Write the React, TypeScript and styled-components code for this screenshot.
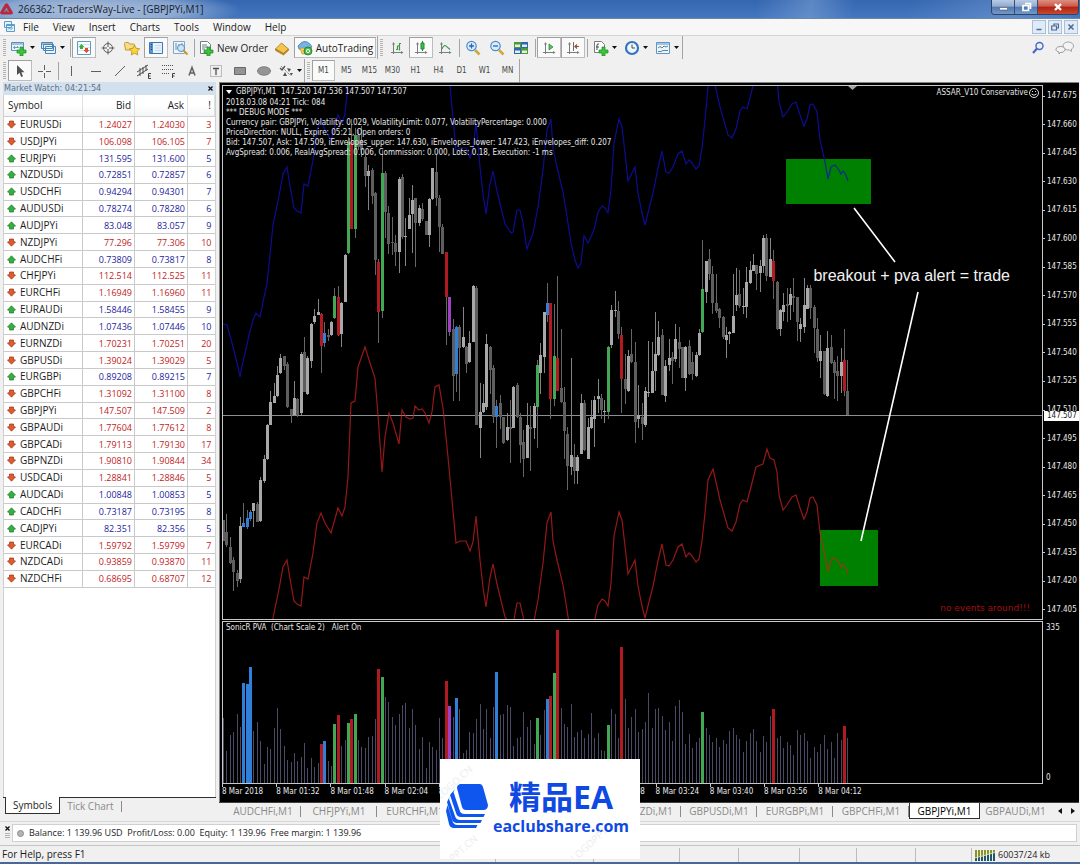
import React from 'react';
import styled, { createGlobalStyle, css } from 'styled-components';

/* ---------- data ---------- */

type Quote = [symbol: string, bid: string, ask: string, spread: number, up: 0 | 1];

const QUOTES: Quote[] = [
  ['EURUSDi', '1.24027', '1.24030', 3, 0],
  ['USDJPYi', '106.098', '106.105', 7, 0],
  ['EURJPYi', '131.595', '131.600', 5, 1],
  ['NZDUSDi', '0.72851', '0.72857', 6, 1],
  ['USDCHFi', '0.94294', '0.94301', 7, 1],
  ['AUDUSDi', '0.78274', '0.78280', 6, 1],
  ['AUDJPYi', '83.048', '83.057', 9, 1],
  ['NZDJPYi', '77.296', '77.306', 10, 0],
  ['AUDCHFi', '0.73809', '0.73817', 8, 1],
  ['CHFJPYi', '112.514', '112.525', 11, 0],
  ['EURCHFi', '1.16949', '1.16960', 11, 0],
  ['EURAUDi', '1.58446', '1.58455', 9, 1],
  ['AUDNZDi', '1.07436', '1.07446', 10, 1],
  ['EURNZDi', '1.70231', '1.70251', 20, 0],
  ['GBPUSDi', '1.39024', '1.39029', 5, 0],
  ['EURGBPi', '0.89208', '0.89215', 7, 1],
  ['GBPCHFi', '1.31092', '1.31100', 8, 0],
  ['GBPJPYi', '147.507', '147.509', 2, 0],
  ['GBPAUDi', '1.77604', '1.77612', 8, 0],
  ['GBPCADi', '1.79113', '1.79130', 17, 0],
  ['GBPNZDi', '1.90810', '1.90844', 34, 0],
  ['USDCADi', '1.28841', '1.28846', 5, 0],
  ['AUDCADi', '1.00848', '1.00853', 5, 1],
  ['CADCHFi', '0.73187', '0.73195', 8, 1],
  ['CADJPYi', '82.351', '82.356', 5, 1],
  ['EURCADi', '1.59792', '1.59799', 7, 0],
  ['NZDCADi', '0.93859', '0.93870', 11, 0],
  ['NZDCHFi', '0.68695', '0.68707', 12, 0],
];

const COLORS: Record<string, string> = {
  l: '#a8a8a8',
  d: '#5e5e5e',
  g: '#43a854',
  r: '#b01a20',
  b: '#2f80d8',
  p: '#a040c4',
};

/* high, body top, body bottom, low, colour */
const CANDLES = `520 520 541 541 d;514 532 545 547 d;537 547 563 564 d;557 560 572 591 d;570 573 581 587 d;517 526 579 583 l;503 523 527 527 b;510 518 527 529 b;510 512 519 521 b;503 503 511 527 l;502 504 522 522 d;477 480 521 522 l;455 459 481 483 l;424 425 459 460 l;391 402 425 425 l;383 396 403 403 l;366 375 396 397 l;354 358 373 374 l;356 356 366 370 d;362 364 407 408 d;409 409 415 423 d;381 398 415 416 l;398 399 415 417 d;352 354 413 415 l;337 352 392 392 d;356 358 394 395 l;323 324 361 368 l;309 316 322 324 l;299 312 315 315 l;313 314 346 373 r;322 333 343 347 b;329 335 337 341 d;321 322 335 336 l;288 296 318 319 g;286 297 335 336 r;302 303 334 347 l;254 255 302 302 l;137 142 253 254 g;119 142 229 229 r;128 135 229 238 g;130 135 147 150 d;126 140 150 157 d;152 157 176 187 d;165 171 176 210 l;168 170 196 204 d;192 193 260 275 d;259 262 312 343 r;150 173 311 318 g;171 173 212 238 d;206 213 244 254 d;217 242 243 255 d;235 243 252 266 d;177 179 252 273 l;174 177 237 239 d;218 236 237 266 l;198 215 229 229 l;185 200 214 253 l;198 198 223 267 d;205 208 223 226 l;203 209 219 221 d;221 221 235 235 d;198 199 235 247 l;168 168 199 200 l;155 172 198 206 d;195 198 227 252 d;224 227 254 254 d;252 252 297 345 r;297 297 332 336 p;319 329 376 401 d;326 327 374 392 b;325 327 348 401 d;307 337 347 348 l;346 347 364 373 d;331 343 362 363 l;285 286 342 342 l;286 288 425 425 d;383 412 428 458 l;384 403 412 413 l;334 344 407 410 l;346 347 370 394 d;365 368 417 423 d;400 406 417 448 b;395 403 417 429 d;417 417 443 444 d;413 427 440 441 l;400 427 429 463 d;386 387 428 428 l;383 385 417 418 d;413 417 445 463 d;430 442 459 477 d;403 425 458 458 l;406 427 429 471 d;403 406 428 439 l;360 365 407 448 g;343 355 373 394 l;312 312 357 373 l;283 303 315 322 b;303 303 399 419 r;304 356 399 406 g;276 358 391 391 r;329 388 402 403 d;387 402 431 459 d;427 434 466 490 d;358 455 467 475 l;444 457 471 484 d;455 457 471 484 l;394 403 454 454 l;400 403 450 451 d;418 427 459 459 l;400 417 428 429 l;396 400 419 447 l;379 396 399 413 l;394 398 410 419 d;400 411 412 423 l;346 347 412 419 g;305 310 345 348 l;291 310 311 317 l;301 311 334 339 d;327 335 379 413 r;354 379 389 404 d;350 356 391 392 l;329 354 362 363 d;342 362 422 443 d;385 415 419 428 l;403 417 424 440 d;387 391 425 427 l;341 392 393 397 l;342 371 393 393 l;312 354 371 391 l;321 337 355 356 l;329 335 395 395 d;360 366 396 402 l;339 358 365 371 l;352 357 361 384 d;324 339 359 362 l;327 342 349 368 d;347 347 378 378 d;346 347 378 391 l;340 346 374 375 d;352 362 374 380 d;352 355 376 377 l;329 333 355 356 l;240 289 332 333 g;261 261 292 303 l;249 259 274 280 d;266 274 303 314 d;274 303 311 313 d;308 309 318 328 d;316 317 337 339 d;327 335 340 358 l;331 332 334 344 l;274 316 333 333 l;268 295 305 311 l;270 294 306 308 d;288 306 307 314 l;267 282 307 318 l;261 270 283 284 l;254 265 271 271 l;265 265 274 290 d;260 266 273 292 l;235 238 266 273 l;234 238 276 281 d;238 259 277 277 l;250 261 281 299 r;281 282 329 330 d;309 310 329 336 l;293 305 312 321 l;288 304 306 322 d;288 294 305 320 l;278 296 298 312 d;297 297 322 341 d;318 324 329 342 l;278 305 327 333 l;285 288 309 309 l;285 288 308 319 d;305 307 328 353 d;318 329 358 362 d;335 351 361 378 l;351 351 394 395 d;331 348 396 397 l;335 347 363 364 d;360 362 373 399 d;356 371 376 401 d;348 362 376 393 l;329 360 391 396 r;360 391 415 415 d`
  .split(';')
  .map((row) => {
    const [high, top, bottom, low, color] = row.split(' ');
    return { high: +high, top: +top, bottom: +bottom, low: +low, color };
  });

/* upper envelope; the lower one runs ENVELOPE_GAP below it */
const ENVELOPE =
  '223,324 227,325 232,343 238,367 240,377 242,366 246,349 249,335 253,320 256,313 260,317 263,302 267,284 270,255 273,225 279,196 283,174 287,167 290,186 294,208 297,211 301,213 304,184 308,186 313,160 317,130 321,120 325,130 331,140 338,115 342,123 345,114 348,84 351,10 355,8 358,-26 365,-46 370,-30 375,-15 378,22 382,79 385,44 389,20 393,30 399,51 402,17 406,24 410,26 413,25 415,13 419,17 422,16 425,20 429,30 432,19 435,-6 439,-8 443,15 448,64 452,107 456,150 460,148 466,148 470,158 473,149 476,123 480,167 483,194 486,214 490,184 493,171 497,191 505,224 511,233 513,232 517,210 520,210 523,223 527,249 533,233 538,207 543,170 547,130 551,119 553,148 557,167 563,192 567,217 571,243 575,260 578,268 581,263 584,236 588,243 594,230 598,212 602,206 605,208 608,213 611,190 614,143 619,119 622,127 625,153 628,181 632,173 635,167 638,193 642,213 645,225 648,213 653,193 658,168 662,151 666,172 669,173 673,167 678,154 682,151 686,164 689,160 692,163 696,169 699,166 702,148 705,120 708,87 713,76 716,89 720,107 728,135 732,138 736,129 740,111 743,107 747,109 752,90 756,74 763,71 767,56 770,65 774,67 777,79 779,102 783,117 787,112 792,104 796,102 800,115 804,126 807,119 810,105 813,104 817,112 820,140 825,162 828,179 831,167 835,165 839,170 841,174 843,171 846,175 848,181';
const ENVELOPE_GAP = 393;

/* bar tops, with a leading letter for highlighted bars */
const VOLUMES =
  '718 751 735 732 714 727 b683 b684 b667 731 722 741 764 747 749 728 708 729 746 760 762 753 761 757 743 768 758 767 763 r744 b741 761 766 g724 r715 746 740 g723 r719 g714 740 747 748 737 736 719 r669 g677 697 702 717 725 714 705 703 728 709 725 749 737 768 742 747 750 718 738 r681 p706 717 b698 709 753 750 732 733 719 704 729 709 738 707 b672 715 714 705 707 746 738 737 712 727 720 744 g718 735 710 b699 r696 g673 r630 708 724 727 704 737 732 730 738 734 713 738 733 750 751 g725 709 714 738 r647 699 728 717 709 732 729 722 693 728 709 708 716 730 722 741 706 700 712 744 734 748 742 738 g712 728 735 742 738 747 740 744 731 728 735 739 752 741 733 729 741 752 736 742 716 r709 738 736 748 742 745 755 730 735 733 741 758 747 752 744 735 749 742 758 733 740 r726 738'.split(
    ' ',
  );

const BAR_STEP = 54 / 16;
const barX = (i: number) => Math.round(223 + i * BAR_STEP);

const PRICES = Array.from({ length: 19 }, (_, i) => (147.675 - i * 0.015).toFixed(3));
const TIMES = ['2018', '01:32', '01:48', '02:04', '02:20', '02:36', '02:52', '03:08', '03:24', '03:40', '03:56', '04:12'];
const TABS = ['AUDCHFi', 'CHFJPYi', 'EURCHFi', 'EURAUDi', 'AUDNZDi', 'EURNZDi', 'GBPUSDi', 'EURGBPi', 'GBPCHFi', 'GBPJPYi', 'GBPAUDi'];
const COMMENT = [
  '2018.03.08 04:21 Tick: 084',
  '*** DEBUG MODE ***',
  'Currency pair: GBPJPYi, Volatility: 0.029, VolatilityLimit: 0.077, VolatilityPercentage: 0.000',
  'PriceDirection: NULL, Expire: 05:21, Open orders: 0',
  'Bid: 147.507, Ask: 147.509, iEnvelopes_upper: 147.630, iEnvelopes_lower: 147.423, iEnvelopes_diff: 0.207',
  'AvgSpread: 0.006, RealAvgSpread: 0.006, Commission: 0.000, Lots: 0.18, Execution: -1 ms',
];

/* ---------- styles ---------- */

const UI = '"Open Sans", "Noto Sans", sans-serif';
const SMALL = '"DejaVu Sans Condensed", "DejaVu Sans", sans-serif';

const GlobalStyle = createGlobalStyle`
  * { box-sizing: border-box; }
  body { margin: 0; background: #f0f0f0; color: #1c1c1c; font: 10px/14px ${UI}; }
  button { margin: 0; padding: 0; border: 0; background: none; color: inherit; font: inherit; }
  svg { display: block; flex: none; }
  p, h1, h2, ul { margin: 0; padding: 0; font: inherit; list-style: none; }
`;

const Window = styled.div`
  position: relative;
  display: flex;
  flex-direction: column;
  min-height: 100vh;
  overflow: hidden;
`;

const TitleBar = styled.header`
  display: flex;
  align-items: center;
  height: 19px;
  padding-right: 1px;
  border-bottom: 1px solid #6f87a6;
  background:
    radial-gradient(ellipse 150px 22px at 90px 10px, rgba(190, 205, 225, 0.85), rgba(190, 205, 225, 0.6) 60%, transparent),
    linear-gradient(100deg, transparent 70%, rgba(130, 165, 215, 0.5) 75%, transparent 79%, transparent 84%, rgba(130, 165, 215, 0.45) 94%, transparent),
    linear-gradient(#3566b0, #4477bf);
`;

const Title = styled.h1`
  flex: 1;
  padding-left: 5px;
  color: #16202e;
`;

const WindowButtons = styled.div`
  display: flex;
  align-self: flex-start;
  height: 15px;
  border: 1px solid #2c4468;
  border-top: 0;
  border-radius: 0 0 4px 4px;
  overflow: hidden;
`;

const WindowButton = styled.button<{ $close?: boolean }>`
  display: grid;
  place-items: center;
  width: ${(p) => (p.$close ? 40 : 23)}px;
  border-right: ${(p) => (p.$close ? '0' : '1px solid #34507a')};
  background: ${(p) =>
    p.$close
      ? 'linear-gradient(#dd9080, #c9584a 45%, #b02010 50%, #c84a30)'
      : 'linear-gradient(#b9cbe4, #91abd0 45%, #5378ad 50%, #7398c8)'};
`;

const MenuBar = styled.nav`
  display: flex;
  align-items: center;
  height: 17px;
  padding: 0 2px 0 4px;
  border-bottom: 1px solid #d4d4d4;
  background: #f7f7f7;
`;

const MenuItem = styled.button`
  margin-left: 14px;
  &:first-of-type {
    margin-left: 7px;
  }
`;

const Spacer = styled.div`
  flex: 1;
`;

const ChildButton = styled.button`
  display: grid;
  place-items: center;
  width: 14px;
  height: 14px;
  margin-left: 2px;
  border: 1px solid #a8c0d8;
  background: #dfebf8;
`;

const ToolBar = styled.div`
  display: flex;
  align-items: center;
  height: 23px;
  padding-left: 1px;
`;

const Group = styled.div<{ $pad?: number }>`
  display: flex;
  align-items: center;
  align-self: stretch;
  padding-right: ${(p) => p.$pad ?? 0}px;
  border-right: 1px solid #a4a4a4;
`;

const Grip = styled.span`
  width: 3px;
  height: 17px;
  margin: 0 2px;
  background: repeating-linear-gradient(#b4b4b4 0 1px, #f0f0f0 1px 2px);
`;

const Divider = styled.span`
  width: 1px;
  height: 18px;
  margin: 0 1px 0 2px;
  background: #a4a4a4;
`;

const Tool = styled.button<{ $on?: boolean; $w?: number }>`
  display: flex;
  align-items: center;
  justify-content: center;
  gap: 3px;
  width: ${(p) => p.$w ?? 24}px;
  height: 21px;
  white-space: nowrap;
  ${(p) =>
    p.$on &&
    css`
      border: 1px solid #bcbcbc;
      border-top-color: #a0a0a0;
      border-left-color: #a0a0a0;
      background: #fafafa;
    `}
`;

const Period = styled(Tool)`
  font: 8px/12px ${SMALL};
  color: #484848;
`;

const Main = styled.main`
  display: flex;
  flex: 1;
`;

const Watch = styled.section`
  display: flex;
  flex-direction: column;
  width: 217px;
  padding: 0 1px 0 3px;
`;

const PanelTitle = styled.header`
  display: flex;
  align-items: center;
  justify-content: space-between;
  height: 13px;
  padding: 0 3px 0 1px;
  background: #d3e0ee;
  color: #5c7186;
  font: 9px/13px ${SMALL};
`;

const WatchBody = styled.div`
  flex: 1;
  border: 1px solid #d0d0d0;
  border-width: 0 1px 0 1px;
  background: #fff;
`;

const QuoteTable = styled.table`
  width: 100%;
  height: 493px;
  border-collapse: collapse;
  table-layout: fixed;
`;

const HeadCell = styled.th<{ $w?: number; $right?: boolean }>`
  width: ${(p) => (p.$w ? `${p.$w}px` : 'auto')};
  height: 21px;
  padding: 0 3px 0 4px;
  border-right: 1px solid #e0e0e0;
  border-bottom: 1px solid #cfcfcf;
  background: linear-gradient(#fff 50%, #f3f4f6);
  font-weight: 400;
  text-align: ${(p) => (p.$right ? 'right' : 'left')};
`;

const Cell = styled.td<{ $tone?: 0 | 1 }>`
  padding: 0 2px;
  border-right: 1px solid #c9c9c9;
  border-bottom: 1px solid #c9c9c9;
  line-height: 13px;
  ${(p) =>
    p.$tone !== undefined &&
    css`
      color: ${p.$tone ? '#1c1c9c' : '#c01c24'};
      font-size: 9px;
      text-align: right;
    `}
  &:last-child {
    border-right: 0;
    padding-right: 3px;
  }
`;

const SymbolName = styled.span`
  display: flex;
  align-items: center;
  gap: 4px;
  padding-left: 1px;
`;

const WatchTabs = styled.div`
  display: flex;
  height: 22px;
  padding-left: 2px;
  border-top: 1px solid #303030;
`;

const WatchTab = styled.button<{ $on?: boolean }>`
  height: 15px;
  padding: 0 7px;
  color: #8a8a8a;
  ${(p) =>
    p.$on &&
    css`
      border: solid #303030;
      border-width: 0 1px 1px 1px;
      margin-top: -1px;
      height: 17px;
      background: #fff;
      color: #1c1c1c;
    `}
`;

const TabMark = styled.span`
  width: 1px;
  height: 11px;
  margin-top: 3px;
  background: #8a8a8a;
`;

const ChartArea = styled.section`
  display: flex;
  flex: 1;
  flex-direction: column;
  min-width: 0;
  margin-left: 2px;
  padding-right: 1px;
`;

const ChartWindow = styled.div`
  display: flex;
  flex: 1;
  flex-direction: column;
  padding: 2px 0 0 2px;
  border: solid #808080;
  border-width: 1px 0 0 1px;
  background: #000;
  color: #e8e8e8;
  font: 8px/10px ${SMALL};
`;

const Pane = styled.div<{ $grow?: boolean }>`
  display: flex;
  flex: ${(p) => (p.$grow ? '1 1 auto' : '0 0 163px')};
  margin-bottom: ${(p) => (p.$grow ? 1 : 0)}px;
`;

const Plot = styled.div`
  position: relative;
  flex: 1;
  border: 1px solid #c8c8c8;
`;

const PlotDrawing = styled.svg`
  position: absolute;
  inset: 0;
  width: 100%;
  height: 100%;
`;

const Comment = styled.div`
  position: absolute;
  left: 3px;
  top: 1px;
  white-space: pre;
`;

const CommentTitle = styled.p`
  display: flex;
  align-items: center;
  gap: 4px;
  margin-bottom: 1px;
`;

const ExpertName = styled.p`
  position: absolute;
  right: 3px;
  top: 2px;
  display: flex;
  align-items: center;
  gap: 1px;
`;

const Events = styled.p`
  position: absolute;
  right: 12px;
  bottom: 5px;
  color: #a01010;
  font: 9px/12px "DejaVu Sans", sans-serif;
`;

const Note = styled.p`
  position: absolute;
  right: 32px;
  top: 34%;
  color: #f2f2f2;
  font: 16px/18px "Liberation Sans", sans-serif;
`;

const Scale = styled.div`
  position: relative;
  display: flex;
  flex-direction: column;
  justify-content: space-between;
  width: 36px;
  padding: 6px 0 5px;
`;

const ScaleLabel = styled.span`
  display: flex;
  align-items: center;
  gap: 2px;
  &::before {
    content: '';
    width: 2px;
    height: 1px;
    background: #c8c8c8;
  }
`;

const VolumeScale = styled(Scale)`
  padding: 2px 0 1px 3px;
`;

const CurrentPrice = styled.span`
  position: absolute;
  left: 1px;
  right: 0;
  top: 61%;
  padding-left: 3px;
  background: #fff;
  color: #202020;
`;

const TimeAxis = styled.div`
  display: grid;
  grid-template-columns: repeat(12, 54fr) 170fr;
  height: 18px;
  margin-right: 36px;
  white-space: nowrap;
`;

const TimeLabel = styled.span`
  &::before {
    content: '';
    display: block;
    width: 1px;
    height: 3px;
    background: #c8c8c8;
  }
`;

const ChartTabs = styled.nav`
  display: flex;
  height: 17px;
  padding-left: 6px;
  border-top: 1px solid #404040;
`;

const ChartTab = styled.button<{ $on?: boolean; $last?: boolean }>`
  position: relative;
  flex: none;
  width: ${(p) => (p.$on || p.$last ? 71 : 76)}px;
  height: 16px;
  color: #8a8a8a;
  &::after {
    content: '';
    position: absolute;
    right: 0;
    top: 3px;
    width: 1px;
    height: 11px;
    background: ${(p) => (p.$on || p.$last ? 'transparent' : '#8a8a8a')};
  }
  ${(p) =>
    p.$on &&
    css`
      border: solid #303030;
      border-width: 0 1px 1px 1px;
      background: #fff;
      color: #000;
    `}
`;

const TabArrow = styled.button`
  display: grid;
  place-items: center;
  flex: none;
  width: 13px;
`;

const Terminal = styled.section`
  display: flex;
  height: 25px;
  margin-top: 2px;
  padding: 2px 3px 3px 2px;
  border-top: 1px solid #d8d8d8;
  border-bottom: 1px solid #c4c4c4;
`;

const TerminalSide = styled.div`
  display: flex;
  flex-direction: column;
  align-items: center;
  gap: 2px;
  width: 10px;
  padding-top: 2px;
`;

const AccountLine = styled.p`
  display: flex;
  align-items: center;
  flex: 1;
  gap: 5px;
  padding-left: 4px;
  border: 1px solid #d0d0d0;
  background: #fff;
  font-size: 9px;
  white-space: pre;
`;

const Dot = styled.span`
  width: 7px;
  height: 7px;
  border: 1px solid #8c8c8c;
  border-radius: 50%;
  background: #b4b4b4;
`;

const StatusBar = styled.footer`
  display: flex;
  align-items: center;
  height: 18px;
  padding-left: 2px;
  border-bottom: 2px solid #4a6798;
`;

const StatusCell = styled.span<{ $w: number }>`
  align-self: stretch;
  width: ${(p) => p.$w}px;
  margin-top: 2px;
  border-left: 1px solid #bcbcbc;
`;

const Traffic = styled(StatusCell)`
  display: flex;
  align-items: center;
  gap: 3px;
  padding-left: 3px;
  font-size: 9px;
`;

const Brand = styled.aside`
  position: absolute;
  left: 50%;
  bottom: 5px;
  display: flex;
  align-items: center;
  width: 200px;
  height: 100px;
  margin-left: -100px;
  padding: 0 0 6px 6px;
  overflow: hidden;
  background: #fff;
  color: #0f49e4;
`;

const BrandText = styled.div`
  display: flex;
  flex-direction: column;
  align-items: center;
  flex: 1;
  padding-right: 8px;
`;

const BrandName = styled.p`
  font: 700 32px/40px "Open Sans", "Noto Sans CJK SC", sans-serif;
`;

const BrandSite = styled.p`
  font: 700 16px/18px "Open Sans", "Noto Sans", sans-serif;
`;

const Watermark = styled.span<{ $x: number; $y: number }>`
  position: absolute;
  left: ${(p) => p.$x}px;
  top: ${(p) => p.$y}px;
  color: #ededed;
  transform: rotate(-42deg);
`;

/* ---------- icons ---------- */

const Svg = ({ w = 16, h = 16, children }: { w?: number; h?: number; children: React.ReactNode }) => (
  <svg width={w} height={h} viewBox={`0 0 ${w} ${h}`} fill="none" aria-hidden="true">
    {children}
  </svg>
);

const Caret = () => (
  <Svg w={5} h={3}>
    <path d="M0 0h5L2.500 3z" fill="#101010" />
  </Svg>
);

const Plus = () => <path d="M9 7h3v3h3v3h-3v3H9v-3H6v-3h3z" fill="#3cc43c" stroke="#178a1e" strokeWidth=".7" />;

const Axes = () => (
  <>
    <path d="M4.500 3v11M2 12.500h11" stroke="#7c7c7c" />
    <path d="M3 4.500 4.500 2 6 4.500zM12 11l2.500 1.500L12 14z" fill="#7c7c7c" />
  </>
);

const Icons: Record<string, React.ReactNode> = {
  app: (
    <Svg w={13} h={14}>
      <path d="M5 2q1.500-1.500 3 0l5 8.500q0 2-2 2H2q-2 0-2-2z" fill="#b52a3e" />
      <path d="M6.500 5.500 9 10H4z" fill="#7f9ac6" />
      <path d="M5.500 8.500h2V11h-2z" fill="#b52a3e" />
    </Svg>
  ),
  doc: (
    <Svg w={12} h={12}>
      <path d="M.5.5h7v6h-7zM2.500 3.500h8v7h-8z" fill="#e6f2fc" stroke="#5a9ccc" />
      <path d="M2.500 4.500h8M4 8.500 5.500 7 7 8.500l2-2" stroke="#5a9ccc" />
    </Svg>
  ),
  newChart: (
    <Svg>
      <path d="M.5 2.500h12v8H.5z" fill="#eaf4fb" stroke="#5a92be" />
      <path d="M1 4h11" stroke="#5a92be" />
      <path d="M2.500 7.500h5M4 6 2.500 7.500 4 9M6 6l1.500 1.500" stroke="#7a96ac" />
      <Plus />
    </Svg>
  ),
  profiles: (
    <Svg>
      <path d="M4.500 6.500h10v7h-10zM2.500 4.500h10v6h-10zM.5 2.500h11v6H.5z" fill="#eaf4fb" stroke="#4884b4" />
      <path d="M1 4h10" stroke="#4884b4" />
    </Svg>
  ),
  watch: (
    <Svg>
      <path d="M1.500 1.500h13v13h-13z" fill="#fff" stroke="#5b9bd0" />
      <path d="M2 4.500h12M2 7.500h12M2 10.500h12" stroke="#d4e4f2" />
      <path d="m5.500 4 3 3H7v2H4V7H2.500z" fill="#3fae3f" />
      <path d="m10.500 13-3-3H9V8h3v2h1.500z" fill="#dc5030" />
    </Svg>
  ),
  target: (
    <Svg>
      <circle cx="8" cy="8" r="4.500" stroke="#5a5a5a" />
      <path d="M8 1.500V7M8 9v5.500M1.500 8H7M9 8h5.500" stroke="#5a5a5a" />
    </Svg>
  ),
  star: (
    <Svg>
      <path d="M.5 3.500q0-1 1-1h3l1 1.500h4q1 0 1 1V10H1.500z" fill="#f6dd8a" stroke="#c49a28" />
      <path d="m10.500 5 1.700 3.300 3.500.5-2.600 2.500.7 3.600-3.300-1.700-3.200 1.700.6-3.600L5.400 8.800l3.500-.5z" fill="#fbd53c" stroke="#b98a16" strokeWidth=".8" />
    </Svg>
  ),
  navigator: (
    <Svg>
      <path d="M1.500 2.500h13v11h-13z" fill="#e8f3fc" stroke="#3a76b4" />
      <path d="M2 3h3v10H2z" fill="#5a94d0" />
      <path d="M3 4.500h1M3 7h1M3 9.500h1" stroke="#173f74" />
      <path d="M7 5.500h6M7 8h6M7 10.500h6" stroke="#c4daec" />
    </Svg>
  ),
  tester: (
    <Svg>
      <path d="M1.500 1.500h11v12h-11z" fill="#eef6fc" stroke="#7fa8c8" />
      <path d="M4 3v7M7 4v3M10 3v2" stroke="#6a86a4" />
      <circle cx="9" cy="8" r="3.500" fill="#c4e0f6" fillOpacity=".8" stroke="#5a90c0" />
      <path d="m11.500 10.500 4 4" stroke="#c79a2a" strokeWidth="2" />
    </Svg>
  ),
  order: (
    <Svg>
      <path d="M2.500 1.500h7l3 3v9h-10z" fill="#fff" stroke="#6e7c86" />
      <path d="M4 5h5M4 7h6M4 9h3" stroke="#6a7a86" />
      <Plus />
    </Svg>
  ),
  book: (
    <Svg>
      <path d="m1.500 9 6-6 7 6-5 4.500z" fill="#f2c54e" stroke="#a8741a" strokeWidth=".8" />
      <path d="M1.500 9v1.500L9.500 15v-1.500zM9.500 13.500V15l5-4.500V9z" fill="#c8891e" stroke="#a8741a" strokeWidth=".6" />
    </Svg>
  ),
  auto: (
    <Svg>
      <path d="M1 6q6-8 12-2l2 3-6 3-7-1z" fill="#74b4e4" stroke="#3a7cb0" strokeWidth=".8" />
      <path d="M3 8h9l-2 6H5z" fill="#f0cc50" stroke="#b0902a" strokeWidth=".6" />
      <circle cx="11" cy="11" r="4" fill="#4cc04a" stroke="#187a20" strokeWidth=".8" />
      <circle cx="11" cy="11" r="1.600" stroke="#fff" />
    </Svg>
  ),
  bars: (
    <Svg>
      <Axes />
      <path d="M7 9.500h1.500V6h1.500M10.500 10.500V3.500H12" stroke="#3c9a48" strokeWidth="1.200" />
    </Svg>
  ),
  candle: (
    <Svg>
      <Axes />
      <path d="M9.500 1v10" stroke="#1f8a2c" />
      <path d="M8 3h3v6H8z" fill="#3fc04c" stroke="#1f8a2c" />
    </Svg>
  ),
  line: (
    <Svg>
      <Axes />
      <path d="M4.500 9.500q3-6 5-3L13 9.500" stroke="#3c9a48" strokeWidth="1.100" />
    </Svg>
  ),
  zoomIn: (
    <Svg>
      <path d="m10 10 4.500 4.500" stroke="#d0a83c" strokeWidth="2.600" />
      <circle cx="6.500" cy="6" r="4.700" fill="#d8ecfb" stroke="#4a8ccc" strokeWidth="1.200" />
      <path d="M4 6h5M6.500 3.500v5" stroke="#2a66b0" strokeWidth="1.300" />
    </Svg>
  ),
  zoomOut: (
    <Svg>
      <path d="m10 10 4.500 4.500" stroke="#d0a83c" strokeWidth="2.600" />
      <circle cx="6.500" cy="6" r="4.700" fill="#d8ecfb" stroke="#4a8ccc" strokeWidth="1.200" />
      <path d="M4 6h5" stroke="#2a66b0" strokeWidth="1.300" />
    </Svg>
  ),
  tile: (
    <Svg>
      <path d="M1 2h7v6H1zM8 8h7v6H8z" fill="#4c9a3a" />
      <path d="M8 2h7v6H8zM1 8h7v6H1z" fill="#2f66b4" />
      <path d="M2 4.500h5V7H2zM9 4.500h5V7H9zM2 10.500h5V13H2zM9 10.500h5V13H9z" fill="#e4f0e4" />
    </Svg>
  ),
  scroll: (
    <Svg>
      <Axes />
      <path d="m8 4 4 3-4 3z" fill="#5cc066" stroke="#2f8a3a" strokeWidth=".8" />
    </Svg>
  ),
  shift: (
    <Svg>
      <Axes />
      <path d="M8.500 2v9" stroke="#6a6a6a" />
      <path d="M14 6.500h-4M12 4.500l-2 2 2 2" stroke="#8c5038" strokeWidth="1.200" />
    </Svg>
  ),
  indicator: (
    <Svg>
      <path d="M1.500 1.500h7l3 3v8h-10z" fill="#fff" stroke="#7a7a7a" />
      <path d="M4 10V5q0-1.500 2-1M3 7h3" stroke="#4a4a4a" />
      <Plus />
    </Svg>
  ),
  clock: (
    <Svg>
      <circle cx="8" cy="8" r="6" fill="#eef6fd" stroke="#3474bc" strokeWidth="2.200" />
      <path d="M8 4.500V8h3" stroke="#4a4a4a" />
    </Svg>
  ),
  template: (
    <Svg>
      <path d="M1.500 2.500h13v11h-13z" fill="#eef6fc" stroke="#5a96c8" />
      <path d="M2 4h12" stroke="#5a96c8" />
      <path d="m3 8 2-1.500 2 1.500 2-2 2 1 2-1M3 11.500h3l2-1h5" stroke="#68808c" />
    </Svg>
  ),
  cursor: (
    <Svg>
      <path d="M5 2v10l2.500-2.200L9.200 14l1.800-.8L9.300 9.300h3.200z" fill="#505050" />
    </Svg>
  ),
  cross: (
    <Svg>
      <path d="M8.500 2v5M8.500 10v5M2 8.500h5M10 8.500h5" stroke="#606060" />
    </Svg>
  ),
  vline: (
    <Svg>
      <path d="M7.500 3v10" stroke="#606060" />
    </Svg>
  ),
  hline: (
    <Svg>
      <path d="M3 8.500h10" stroke="#606060" />
    </Svg>
  ),
  trend: (
    <Svg>
      <path d="M3 13 13 3" stroke="#606060" />
    </Svg>
  ),
  channel: (
    <Svg>
      <path d="M1 9 12 2M1 13l11-7M4 5v8M7 4v7M10 2v6" stroke="#505050" />
      <path d="M15 10.500h-2.500v5H15M12.500 13h2" stroke="#404040" />
    </Svg>
  ),
  fibo: (
    <Svg>
      <path d="M2 2.500h12M2 6.500h12M2 10.500h8" stroke="#505050" strokeDasharray="1 1" />
      <path d="M15 10.500h-2.500V15M12.500 13h2" stroke="#404040" />
    </Svg>
  ),
  text: (
    <Svg>
      <path d="M5 12.500 8 4.500l3 8M6 10h4" stroke="#606060" strokeWidth="1.500" />
    </Svg>
  ),
  label: (
    <Svg>
      <path d="M2.500 2.500h11v11h-11z" stroke="#8a8a8a" strokeDasharray="1 1" />
      <path d="M5 5.500h6M8 5.500V12" stroke="#505050" strokeWidth="1.300" />
    </Svg>
  ),
  rect: (
    <Svg>
      <path d="M2.500 4.500h11v7h-11z" fill="#949494" stroke="#686868" />
    </Svg>
  ),
  ellipse: (
    <Svg>
      <ellipse cx="8" cy="8" rx="6.500" ry="4.200" fill="#949494" stroke="#7c7c7c" />
    </Svg>
  ),
  arrows: (
    <Svg>
      <path d="m2 5 2 2 3-4" stroke="#505050" strokeWidth="1.300" />
      <path d="m3 3 9 9" stroke="#606060" strokeDasharray="1 1" />
      <path d="m9 5 4 1-2 3zM7 9l2 4H5zM12 10h3l-2 3z" fill="#505050" />
    </Svg>
  ),
  search: (
    <Svg w={14} h={14}>
      <circle cx="8.500" cy="5" r="3.500" fill="#eaf0fc" stroke="#4a66c0" strokeWidth="1.400" />
      <path d="m6 7.500-4 4.500" stroke="#4a66c0" strokeWidth="2.200" />
    </Svg>
  ),
  chat: (
    <Svg w={20} h={14}>
      <path d="M13 1c3 0 5.500 1.500 5.500 4 0 1.500-.8 2.500-2 3v2.500L14.500 9C10 9 8 7.500 8 5s2.500-4 5-4z" fill="#f4f4f4" stroke="#a4a4a4" />
      <path d="M5.500 5.500c3 0 4.500 1.200 4.500 3s-2 3-4.500 3L4 13v-2c-1.800-.4-3-1.200-3-2.500 0-1.800 2-3 4.500-3z" fill="#f4f4f4" stroke="#949494" />
    </Svg>
  ),
  up: (
    <Svg w={9} h={9}>
      <path d="M4.500.8 8.500 5 6.500 5.400V8h-4V5.400L.5 5z" fill="#35b040" stroke="#177a22" strokeWidth=".7" />
    </Svg>
  ),
  down: (
    <Svg w={9} h={9}>
      <path d="M4.500 8.200.5 4l2-.4V1h4v2.600l2 .4z" fill="#e05a2e" stroke="#983214" strokeWidth=".7" />
    </Svg>
  ),
  closeMark: (
    <Svg w={5} h={5}>
      <path d="m.5.5 4 4M4.500.5l-4 4" stroke="#101010" strokeWidth="1.300" />
    </Svg>
  ),
  smile: (
    <Svg w={10} h={10}>
      <circle cx="5" cy="5" r="4.500" stroke="#dcdcdc" />
      <path d="M3 3.500h1M6 3.500h1M2.500 6q2.500 2.500 5 0" stroke="#dcdcdc" />
    </Svg>
  ),
  traffic: (
    <Svg w={20} h={11}>
      <path d="M1 0v11M4 0v11M7 0v11M10 0v11M13 0v11M16 0v11M19 0v11" stroke="#8a9224" strokeWidth="2" />
      <path d="M1 8v3M4 7v4M7 7v4M10 6v5M13 5v6M16 4v7M19 3v8" stroke="#1f5668" strokeWidth="2" />
      <path d="M0 8 20 2.500" stroke="#dfe6c8" strokeWidth=".8" />
    </Svg>
  ),
};

const ToolRow = ({ names, on = [] }: { names: string[]; on?: string[] }) => (
  <>
    {names.map((name) => (
      <Tool key={name} $on={on.includes(name)} aria-label={name}>
        {Icons[name]}
      </Tool>
    ))}
  </>
);

/* ---------- sections ---------- */

const TopBars = () => (
  <>
    <TitleBar>
      {Icons.app}
      <Title>266362: TradersWay-Live - [GBPJPYi,M1]</Title>
      <WindowButtons>
        <WindowButton aria-label="Minimize">
          <Svg w={11} h={10}>
            <path d="M1.500 5.500h8v2.500h-8z" fill="#fff" stroke="#48566c" strokeWidth=".6" />
          </Svg>
        </WindowButton>
        <WindowButton aria-label="Restore">
          <Svg w={11} h={10}>
            <path d="M4 1.500h5.500V7M2 3.500h5.500v5H2z" stroke="#fff" strokeWidth="1.700" />
          </Svg>
        </WindowButton>
        <WindowButton $close aria-label="Close">
          <Svg w={10} h={10}>
            <path d="m2 2 6 6M8 2 2 8" stroke="#fff" strokeWidth="2.400" />
          </Svg>
        </WindowButton>
      </WindowButtons>
    </TitleBar>
    <MenuBar>
      {Icons.doc}
      {['File', 'View', 'Insert', 'Charts', 'Tools', 'Window', 'Help'].map((m) => (
        <MenuItem key={m}>{m}</MenuItem>
      ))}
      <Spacer />
      <ChildButton aria-label="Minimize chart">
        <Svg w={8} h={8}>
          <path d="M1.500 6.500h5" stroke="#4a6a8c" strokeWidth="1.500" />
        </Svg>
      </ChildButton>
      <ChildButton aria-label="Restore chart">
        <Svg w={8} h={8}>
          <path d="M3 2.500V1h4.500v4H6M.7 3h4.800v4H.7z" stroke="#4a6a8c" strokeWidth="1.200" />
        </Svg>
      </ChildButton>
      <ChildButton aria-label="Close chart">
        <Svg w={8} h={8}>
          <path d="m1.500 1.500 5 5M6.500 1.500l-5 5" stroke="#4a6a8c" strokeWidth="1.500" />
        </Svg>
      </ChildButton>
    </MenuBar>
    <ToolBar>
      <Grip />
      <Tool $w={30} aria-label="New chart">
        {Icons.newChart}
        <Caret />
      </Tool>
      <Tool $w={30} aria-label="Profiles">
        {Icons.profiles}
        <Caret />
      </Tool>
      <Divider />
      <ToolRow names={['watch', 'target', 'star', 'navigator', 'tester']} on={['watch', 'navigator']} />
      <Divider />
      <Tool $w={74}>
        {Icons.order}
        New Order
      </Tool>
      <ToolRow names={['book']} />
      <Group $pad={1}>
        <Tool $w={82} $on>
          {Icons.auto}
          AutoTrading
        </Tool>
      </Group>
      <Group>
        <Grip />
        <ToolRow names={['bars', 'candle', 'line']} on={['candle']} />
        <Divider />
        <ToolRow names={['zoomIn', 'zoomOut', 'tile']} />
        <Divider />
        <ToolRow names={['scroll', 'shift']} on={['scroll', 'shift']} />
        <Divider />
        {['indicator', 'clock', 'template'].map((name) => (
          <Tool key={name} $w={31} aria-label={name}>
            {Icons[name]}
            <Caret />
          </Tool>
        ))}
      </Group>
      <Spacer />
      <Tool aria-label="Search">{Icons.search}</Tool>
      <Tool $w={30} aria-label="Chat">
        {Icons.chat}
      </Tool>
    </ToolBar>
    <ToolBar>
      <Grip />
      <ToolRow names={['cursor', 'cross']} on={['cursor']} />
      <Divider />
      <ToolRow names={['vline', 'hline', 'trend', 'channel', 'fibo', 'text', 'label', 'rect', 'ellipse']} />
      <Group>
        <Tool $w={28} aria-label="Arrows">
          {Icons.arrows}
          <Caret />
        </Tool>
      </Group>
      <Group>
        <Grip />
        {['M1', 'M5', 'M15', 'M30', 'H1', 'H4', 'D1', 'W1', 'MN'].map((m) => (
          <Period key={m} $w={23} $on={m === 'M1'}>
            {m}
          </Period>
        ))}
      </Group>
    </ToolBar>
  </>
);

const MarketWatch = () => (
  <Watch>
    <PanelTitle>
      <h2>Market Watch: 04:21:54</h2>
      <button aria-label="Close Market Watch">{Icons.closeMark}</button>
    </PanelTitle>
    <WatchBody>
      <QuoteTable>
        <thead>
          <tr>
            <HeadCell>Symbol</HeadCell>
            <HeadCell $w={52} $right>
              Bid
            </HeadCell>
            <HeadCell $w={53} $right>
              Ask
            </HeadCell>
            <HeadCell $w={27} $right>
              !
            </HeadCell>
          </tr>
        </thead>
        <tbody>
          {QUOTES.map(([symbol, bid, ask, spread, up]) => (
            <tr key={symbol}>
              <Cell>
                <SymbolName>
                  {up ? Icons.up : Icons.down}
                  {symbol}
                </SymbolName>
              </Cell>
              <Cell $tone={up}>{bid}</Cell>
              <Cell $tone={up}>{ask}</Cell>
              <Cell $tone={up}>{spread}</Cell>
            </tr>
          ))}
        </tbody>
      </QuoteTable>
    </WatchBody>
    <WatchTabs>
      <WatchTab $on>Symbols</WatchTab>
      <WatchTab>Tick Chart</WatchTab>
      <TabMark />
    </WatchTabs>
  </Watch>
);

const PriceDrawing = () => (
  <PlotDrawing viewBox="223 86 819 533" preserveAspectRatio="none">
    <path d="M223 415.500H1042" stroke="#8a9096" />
    <g shapeRendering="crispEdges">
      {CANDLES.map((c, i) => (
        <g key={i} fill={COLORS[c.color]}>
          <rect x={barX(i)} y={c.high} width="1" height={Math.max(1, c.low - c.high)} fill={c.color === 'l' ? '#848484' : '#666'} />
          <rect x={barX(i) - 1} y={c.top} width="3" height={Math.max(1, c.bottom - c.top)} />
        </g>
      ))}
    </g>
    <path d="M786 159h85v45h-85zM820 530h58v56h-58z" fill="#008000" />
    <g fill="none" strokeWidth="1.200">
      <polyline points={ENVELOPE} stroke="#1010b8" opacity=".8" />
      <g transform={`translate(0 ${ENVELOPE_GAP})`}>
        <polyline points={ENVELOPE} stroke="#c82020" opacity=".75" />
      </g>
    </g>
    <path d="M854 208l41 54M918 292 861 541" stroke="#fff" strokeWidth="1.600" />
    <path d="M848 86h9l-4.500 4z" fill="#a0a8ac" />
  </PlotDrawing>
);

const VolumeDrawing = () => (
  <PlotDrawing viewBox="223 622 819 161" preserveAspectRatio="none" shapeRendering="crispEdges">
    {VOLUMES.map((v, i) => {
      const color = COLORS[v[0]];
      const top = Number(color ? v.slice(1) : v);
      return (
        <rect key={i} x={barX(i) - (color ? 1 : 0)} y={top} width={color ? 3 : 1} height={783 - top} fill={color ?? '#4a4a66'} />
      );
    })}
  </PlotDrawing>
);

const Chart = () => (
  <ChartArea>
    <ChartWindow>
      <Pane $grow>
        <Plot>
          <PriceDrawing />
          <Comment>
            <CommentTitle>
              <Svg w={6} h={4}>
                <path d="M0 0h6L3 4z" fill="#fff" />
              </Svg>
              {'GBPJPYi,M1  147.520 147.536 147.507 147.507'}
            </CommentTitle>
            {COMMENT.map((line) => (
              <p key={line}>{line}</p>
            ))}
          </Comment>
          <ExpertName>ASSAR_V10 Conservative{Icons.smile}</ExpertName>
          <Note>breakout + pva alert = trade</Note>
          <Events>no events around!!!</Events>
        </Plot>
        <Scale>
          {PRICES.map((p) => (
            <ScaleLabel key={p}>{p}</ScaleLabel>
          ))}
          <CurrentPrice>147.507</CurrentPrice>
        </Scale>
      </Pane>
      <Pane>
        <Plot>
          <VolumeDrawing />
          <Comment>{'SonicR PVA  (Chart Scale 2)   Alert On'}</Comment>
        </Plot>
        <VolumeScale>
          <span>335</span>
          <span>0</span>
        </VolumeScale>
      </Pane>
      <TimeAxis>
        {TIMES.map((t) => (
          <TimeLabel key={t}>8 Mar {t}</TimeLabel>
        ))}
      </TimeAxis>
    </ChartWindow>
    <ChartTabs>
      {TABS.map((t) => (
        <ChartTab key={t} $on={t === 'GBPJPYi'} $last={t === 'GBPAUDi'}>
          {t},M1
        </ChartTab>
      ))}
      <Spacer />
      <TabArrow aria-label="Previous charts">
        <Svg w={4} h={6}>
          <path d="M4 0v6L0 3z" fill="#101010" />
        </Svg>
      </TabArrow>
      <TabArrow aria-label="Next charts">
        <Svg w={4} h={6}>
          <path d="M0 0v6l4-3z" fill="#101010" />
        </Svg>
      </TabArrow>
    </ChartTabs>
  </ChartArea>
);

export default function App() {
  return (
    <>
      <GlobalStyle />
      <Window>
        <TopBars />
        <Main>
          <MarketWatch />
          <Chart />
        </Main>
        <Terminal>
          <TerminalSide>
            <button aria-label="Close terminal">{Icons.closeMark}</button>
            <Svg w={5} h={6}>
              <path d="M0 .5h5M0 2.500h5M0 4.500h5" stroke="#b4b4b4" />
            </Svg>
          </TerminalSide>
          <AccountLine>
            <Dot />
            {'Balance: 1 139.96 USD  Profit/Loss: 0.00  Equity: 1 139.96  Free margin: 1 139.96'}
          </AccountLine>
        </Terminal>
        <StatusBar>
          For Help, press F1
          <Spacer />
          {[98, 86, 59, 61, 57, 59, 56].map((w, i) => (
            <StatusCell key={i} $w={w} />
          ))}
          <Traffic $w={109}>
            {Icons.traffic}
            60037/24 kb
          </Traffic>
        </StatusBar>
        <Brand>
          <Watermark $x={-8} $y={16}>
            LOGO.CN
          </Watermark>
          <Watermark $x={6} $y={82}>
            PPT.CN
          </Watermark>
          <Watermark $x={126} $y={78}>
            LOGOPPT
          </Watermark>
          <Svg w={44} h={46}>
            <path d="M14 1h20q2 0 3 3l5 18q0 5-5 5H20q-3 0-4-3L11 5q0-3 3-4z" fill="#0f56ee" />
            <path d="M9 6 7.500 9l6 18q1 4 5 4H39l-1.500 3H15q-4 0-5-4L4 12zM4 13l-1 3 6 17q1 4 5 4h22l-1.500 3H11q-4 0-5-4L1 19zM1.500 22l5 16q1 4 5 4h20L30 45H8q-4 0-5-4L0 28z" fill="#0f56ee" />
          </Svg>
          <BrandText>
            <BrandName>精品EA</BrandName>
            <BrandSite>eaclubshare.com</BrandSite>
          </BrandText>
        </Brand>
      </Window>
    </>
  );
}
